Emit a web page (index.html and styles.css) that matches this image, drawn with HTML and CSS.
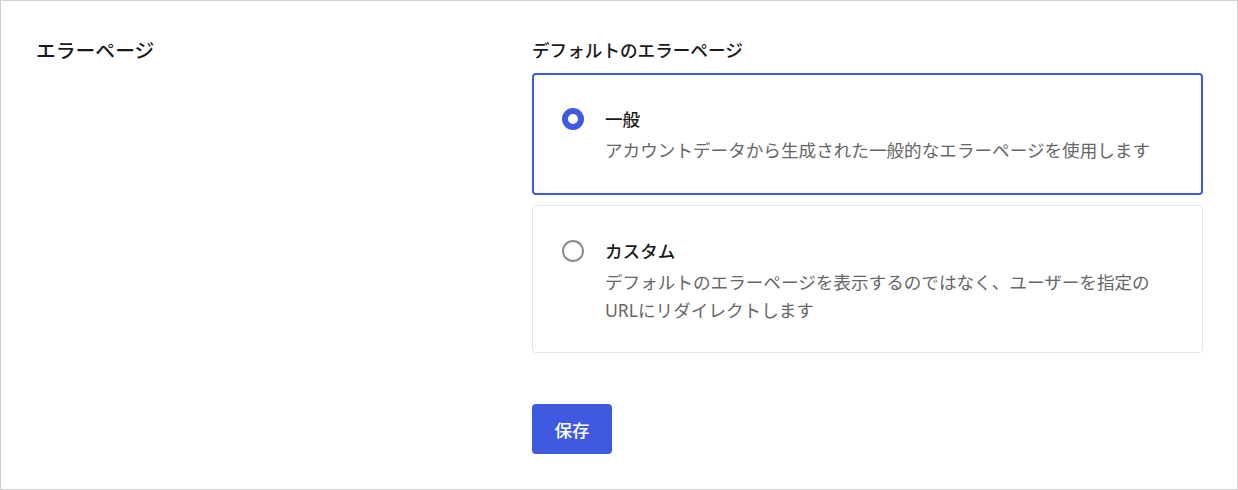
FILE: index.html
```html
<!DOCTYPE html>
<html lang="ja">
<head>
<meta charset="utf-8">
<title>エラーページ</title>
<link rel="stylesheet" href="styles.css">
</head>
<body>
<div class="panel">
  <h2 class="section-title">エラーページ</h2>
  <div class="content">
    <h3 class="field-title">デフォルトのエラーページ</h3>
    <div class="options">
      <label class="option selected">
        <span class="radio checked"></span>
        <span class="option-text">
          <span class="option-label">一般</span>
          <span class="option-desc">アカウントデータから生成された一般的なエラーページを使用します</span>
        </span>
      </label>
      <label class="option">
        <span class="radio"></span>
        <span class="option-text">
          <span class="option-label">カスタム</span>
          <span class="option-desc">デフォルトのエラーページを表示するのではなく、ユーザーを指定の<br>URLにリダイレクトします</span>
        </span>
      </label>
    </div>
    <button class="save-btn" type="button">保存</button>
  </div>
</div>
</body>
</html>
```

FILE: styles.css
```css
* { box-sizing: border-box; }
html, body { margin: 0; padding: 0; background: #fff; }
body {
  font-family: "Noto Sans", "Noto Sans CJK JP", sans-serif;
  color: #1a1a1a;
}
.panel {
  width: 1238px;
  height: 490px;
  border: 1px solid #cfcfcf;
  padding: 36px 34px 0 35px;
  display: grid;
  grid-template-columns: 496px 1fr;
}
.section-title {
  margin: 0;
  font-size: 19.8px;
  font-weight: 500;
  line-height: 28px;
}
.field-title {
  margin: 0 0 10px;
  font-size: 17.6px;
  font-weight: 500;
  line-height: 26px;
}
.options {
  display: flex;
  flex-direction: column;
  gap: 10px;
}
.option {
  display: flex;
  align-items: flex-start;
  gap: 21px;
  border: 1px solid #e3e3e3;
  border-radius: 4px;
  padding: 32px 30px 28px 29px;
}
.option.selected {
  border: 2px solid #3f5ae0;
  padding: 31px 29px 29px 28px;
}
.radio {
  flex: none;
  width: 22px;
  height: 22px;
  border-radius: 50%;
  border: 2px solid #8c8c8c;
  margin-top: 2px;
}
.radio.checked {
  border: 6px solid #3f5ae0;
}
.option-text {
  display: flex;
  flex-direction: column;
  gap: 4px;
}
.option-label {
  font-size: 17.6px;
  font-weight: 500;
  line-height: 26px;
  color: #1a1a1a;
}
.option-desc {
  font-size: 17.6px;
  line-height: 28px;
  color: #666;
}
.save-btn {
  margin-top: 51px;
  width: 80px;
  height: 50px;
  border: none;
  border-radius: 4px;
  background: #3f5ae0;
  color: #fff;
  font-family: inherit;
  font-size: 17.6px;
  font-weight: 500;
}
```
